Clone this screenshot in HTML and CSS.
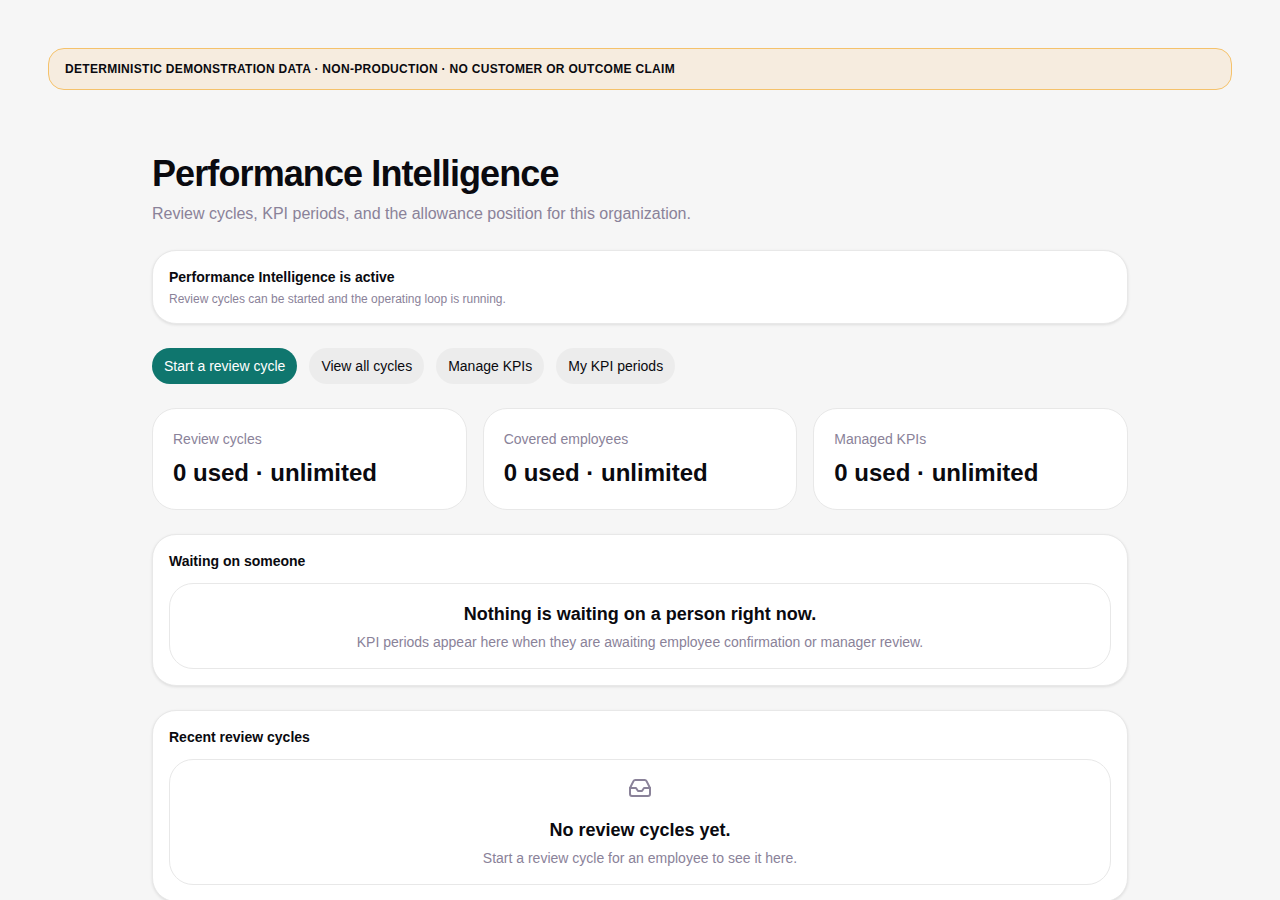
FILE: index.html
```html
<!DOCTYPE html>
<html lang="en">
<head>
    <meta charset="UTF-8">
    <meta name="viewport" content="width=device-width, initial-scale=1.0">
    <title>Performance Intelligence</title>
    <link rel="stylesheet" href="styles.css">
</head>
<body>
    <div class="demo-banner">DETERMINISTIC DEMONSTRATION DATA · NON-PRODUCTION · NO CUSTOMER OR OUTCOME CLAIM</div>

    <main class="page">
        <h1 class="page-title">Performance Intelligence</h1>
        <p class="page-subtitle">Review cycles, KPI periods, and the allowance position for this organization.</p>

        <section class="card">
            <h2 class="card-title">Performance Intelligence is active</h2>
            <p class="status-text">Review cycles can be started and the operating loop is running.</p>
        </section>

        <div class="actions">
            <a class="btn btn-primary">Start a review cycle</a>
            <a class="btn">View all cycles</a>
            <a class="btn">Manage KPIs</a>
            <a class="btn">My KPI periods</a>
        </div>

        <div class="stats">
            <div class="stat">
                <div class="stat-label">Review cycles</div>
                <div class="stat-value">0 used · unlimited</div>
            </div>
            <div class="stat">
                <div class="stat-label">Covered employees</div>
                <div class="stat-value">0 used · unlimited</div>
            </div>
            <div class="stat">
                <div class="stat-label">Managed KPIs</div>
                <div class="stat-value">0 used · unlimited</div>
            </div>
        </div>

        <section class="card">
            <h2 class="card-title">Waiting on someone</h2>
            <div class="empty">
                <h3 class="empty-title">Nothing is waiting on a person right now.</h3>
                <p class="empty-text">KPI periods appear here when they are awaiting employee confirmation or manager review.</p>
            </div>
        </section>

        <section class="card">
            <h2 class="card-title">Recent review cycles</h2>
            <div class="empty">
                <svg class="empty-icon" width="24" height="24" viewBox="0 0 24 24" fill="none" stroke="currentColor" stroke-width="2" stroke-linecap="round" stroke-linejoin="round">
                    <polyline points="22 12 16 12 14 15 10 15 8 12 2 12"></polyline>
                    <path d="M5.45 5.11 2 12v6a2 2 0 0 0 2 2h16a2 2 0 0 0 2-2v-6l-3.45-6.89A2 2 0 0 0 16.76 4H7.24a2 2 0 0 0-1.79 1.11z"></path>
                </svg>
                <h3 class="empty-title">No review cycles yet.</h3>
                <p class="empty-text">Start a review cycle for an employee to see it here.</p>
            </div>
        </section>
    </main>
</body>
</html>
```

FILE: styles.css
```css
* {
    box-sizing: border-box;
}
body {
    margin: 0;
    padding: 48px;
    font-family: "Liberation Sans", Arial, sans-serif;
    background-color: #f6f6f6;
    color: #0a0a0f;
}
.demo-banner {
    height: 42px;
    padding: 0 16px;
    display: flex;
    align-items: center;
    font-size: 12px;
    font-weight: 700;
    letter-spacing: 0.3px;
    background-color: #f6ecdf;
    border: 1px solid #f5c26b;
    border-radius: 16px;
}
.page {
    max-width: 976px;
    margin: 48px auto 0;
}
.page-title {
    margin: 0;
    padding-top: 16px;
    font-size: 36px;
    line-height: 40px;
    font-weight: 700;
    letter-spacing: -0.9px;
}
.page-subtitle {
    margin: 8px 0 0;
    font-size: 16px;
    line-height: 24px;
    color: #8a8299;
}
.card {
    margin-top: 24px;
    padding: 16px;
    background-color: #fff;
    border: 1px solid #e8e8e8;
    border-radius: 24px;
    box-shadow: 0 1px 3px rgba(0, 0, 0, 0.1);
}
.card-title {
    margin: 0;
    font-size: 14px;
    line-height: 20px;
    font-weight: 700;
}
.status-text {
    margin: 4px 0 0;
    font-size: 12px;
    line-height: 16px;
    color: #8a8299;
}
.actions {
    display: flex;
    gap: 12px;
    margin-top: 24px;
}
.btn {
    height: 36px;
    padding: 0 12px;
    display: flex;
    align-items: center;
    font-size: 14px;
    background-color: #ececec;
    border-radius: 18px;
}
.btn-primary {
    background-color: #0f766e;
    color: #fff;
}
.stats {
    display: grid;
    grid-template-columns: repeat(3, 1fr);
    gap: 16px;
    margin-top: 24px;
}
.stat {
    padding: 20px;
    background-color: #fff;
    border: 1px solid #e8e8e8;
    border-radius: 24px;
}
.stat-label {
    font-size: 14px;
    line-height: 20px;
    color: #8a8299;
}
.stat-value {
    margin-top: 8px;
    font-size: 24px;
    line-height: 32px;
    font-weight: 700;
}
.empty {
    margin-top: 12px;
    padding: 16px 20px;
    text-align: center;
    border: 1px solid #e8e8e8;
    border-radius: 24px;
}
.empty-icon {
    display: block;
    margin: 0 auto 16px;
    color: #8a8299;
}
.empty-title {
    margin: 0;
    font-size: 18px;
    line-height: 28px;
    font-weight: 700;
}
.empty-text {
    margin: 4px 0 0;
    font-size: 14px;
    line-height: 20px;
    color: #8a8299;
}
```
